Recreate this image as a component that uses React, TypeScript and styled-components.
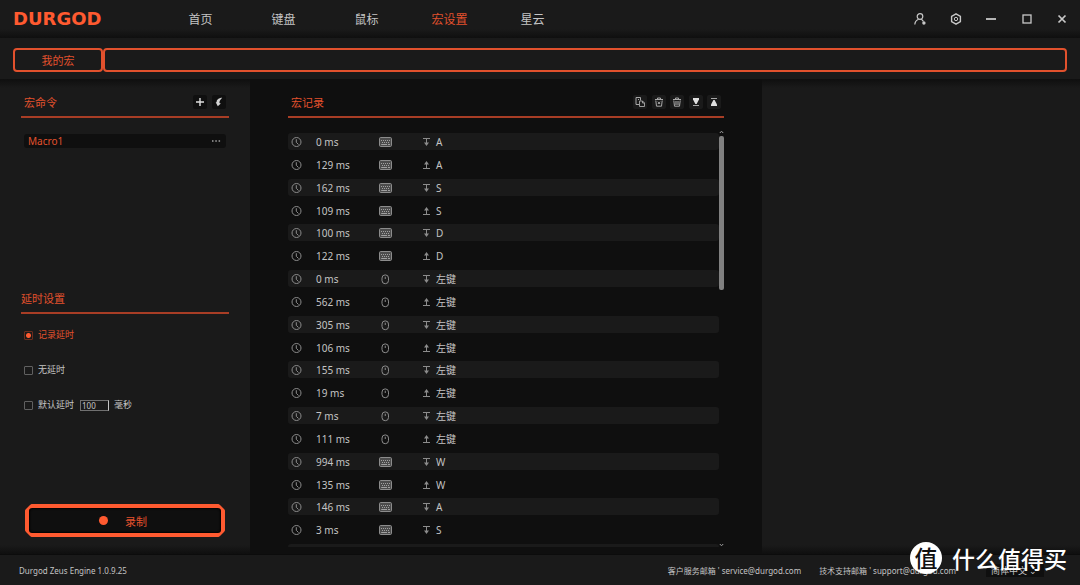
import React, { useState } from "react";
import styled, { createGlobalStyle, css } from "styled-components";

const c = {
  panel: "#1a1a1a",
  deep: "#0f0f0f",
  edge: "#0c0c0c",
  accent: "#ff5a30",
  accentText: "#e2512d",
  rule: "#a83d25",
  text: "#c4c4c4",
  icon: "#8c8c8c",
};

const Global = createGlobalStyle`
  *, *::before, *::after { box-sizing: border-box; }
  body {
    margin: 0;
    background: ${c.panel};
    color: ${c.text};
    font-family: "Noto Sans", "Noto Sans CJK SC", sans-serif;
    font-size: 10px;
  }
  button, input, select { font: inherit; color: inherit; margin: 0; padding: 0; }
  button { cursor: pointer; background: none; border: 0; }
  h2 { margin: 0; font-weight: 400; }
`;

const Page = styled.div`
  position: relative;
  display: flex;
  flex-direction: column;
  min-height: 100vh;
`;

const Header = styled.header`
  display: flex;
  align-items: center;
  height: 38px;
  padding: 0 12px 0 13px;
  background: linear-gradient(to top, ${c.deep}, ${c.panel} 9px);
`;

const Logo = styled.div`
  width: 146px;
  font: 700 18px/38px "DejaVu Sans", sans-serif;
  color: ${c.accent};
`;

const Nav = styled.nav`
  display: flex;
  flex: 1;
`;

const NavLink = styled.a<{ $active?: boolean }>`
  width: 83px;
  padding-top: 2px;
  text-align: center;
  font-size: 12px;
  line-height: 36px;
  text-decoration: none;
  color: ${(p) => (p.$active ? c.accentText : c.text)};
`;

const WindowControls = styled.div`
  display: flex;
  justify-content: space-between;
  width: 154px;
`;

const ControlButton = styled.button`
  display: grid;
  place-items: center;
  width: 12px;
  height: 38px;
  color: #c8c8c8;
  svg { overflow: visible; }
`;

const MacroBar = styled.div`
  display: flex;
  height: 41px;
  padding: 10px 13px 7px;
`;

const frame = css`
  height: 24px;
  border: 2px solid ${c.accentText};
  border-radius: 4px;
`;

const MacroTab = styled.button`
  ${frame}
  width: 90px;
  font-size: 11px;
  color: ${c.accentText};
`;

const MacroStrip = styled.div`
  ${frame}
  flex: 1;
`;

const Main = styled.main`
  display: grid;
  grid-template-columns: 250px 512fr 318fr;
  flex: 1;
  min-height: 0;
`;

const sidePanel = css`
  background:
    linear-gradient(${c.deep}, transparent) top / 100% 9px no-repeat,
    linear-gradient(transparent, ${c.deep}) bottom / 100% 9px no-repeat,
    ${c.panel};
`;

const Sidebar = styled.aside`
  ${sidePanel}
  display: flex;
  flex-direction: column;
  padding: 0 21px 17px;
`;

const EmptyPanel = styled.section`
  ${sidePanel}
`;

const Records = styled.section`
  display: flex;
  flex-direction: column;
  padding: 0 38px 7px;
  background: ${c.deep};
`;

const SectionHead = styled.div<{ $inset?: boolean }>`
  display: flex;
  align-items: center;
  justify-content: space-between;
  height: 39px;
  padding: 9px 3px 0 ${(p) => (p.$inset ? "3px" : "0")};
  border-bottom: 2px solid ${c.rule};
`;

const SectionTitle = styled.h2`
  padding-top: 2px;
  font-size: 11px;
  line-height: 16px;
  color: ${c.accentText};
`;

const Tools = styled.div<{ $width: number }>`
  display: flex;
  justify-content: space-between;
  width: ${(p) => p.$width}px;
`;

const ToolButton = styled.button<{ $dark?: boolean }>`
  display: grid;
  place-items: center;
  width: 14px;
  height: 14px;
  border-radius: 2px;
  background: ${(p) => (p.$dark ? c.deep : c.panel)};
  color: #a8a8a8;
`;

const MacroItem = styled.div`
  display: flex;
  align-items: center;
  justify-content: space-between;
  height: 14px;
  margin: 16px 3px 0;
  padding: 0 5px 0 4px;
  border-radius: 3px;
  background: ${c.deep};
`;

const MacroName = styled.button`
  line-height: 14px;
  color: ${c.accentText};
`;

const MoreButton = styled.button`
  display: grid;
  width: 10px;
  color: #a0a0a0;
`;

const DelaySection = styled.section`
  margin-top: 127px;
`;

const DelayOptions = styled.div`
  display: flex;
  flex-direction: column;
  gap: 21px;
  padding: 14px 3px 0;
  font-size: 9px;
`;

const DelayRow = styled.div<{ $on?: boolean }>`
  display: flex;
  align-items: center;
  height: 14px;
  color: ${(p) => (p.$on ? c.accentText : c.text)};
  label { line-height: 14px; }
`;

const Radio = styled.input`
  appearance: none;
  width: 9px;
  height: 9px;
  margin-right: 5px;
  border: 1px solid #606060;
  border-radius: 1px;
  &:checked {
    border-color: #6b2d1e;
    background: radial-gradient(circle, ${c.accent} 2px, transparent 3px);
  }
`;

const DelayInput = styled.input`
  width: 29px;
  height: 11px;
  margin: 0 5px 0 6px;
  padding-left: 1px;
  border: 1px solid #707070;
  border-right-color: ${c.text};
  background: ${c.panel};
  font-size: 8px;
  line-height: 9px;
`;

const RecordButton = styled.button`
  display: flex;
  align-items: center;
  justify-content: center;
  gap: 17px;
  height: 33px;
  margin: auto 4px 0;
  padding-right: 4px;
  border: 4px solid ${c.accent};
  border-radius: 7px;
  clip-path: polygon(6px 0, calc(100% - 6px) 0, 100% 6px, 100% calc(100% - 6px), calc(100% - 6px) 100%, 6px 100%, 0 calc(100% - 6px), 0 6px);
  background: ${c.deep};
  box-shadow: inset 0 0 2px 1px #000;
  font-size: 11px;
  color: ${c.accentText};
  &::before {
    content: "";
    width: 9px;
    height: 9px;
    border-radius: 50%;
    background: ${c.accent};
  }
`;

const RecordArea = styled.div`
  display: grid;
  grid-template-columns: 1fr 5px;
  flex: 1;
  margin-top: 12px;
`;

const RecordList = styled.ol`
  display: grid;
  grid-template-rows: repeat(18, minmax(17px, 1fr)) 3px;
  margin: 0;
  padding: 3px 0 0;
  list-style: none;
`;

const RecordRow = styled.li`
  display: grid;
  grid-template-columns: 25px 63px 44px 13px 1fr;
  align-items: center;
  height: 17px;
  padding: 2px 0 0 3px;
  border-radius: 3px;
  color: ${c.text};
  line-height: 15px;
  &:nth-child(odd) { background: ${c.panel}; }
  &:last-child { height: 3px; border-radius: 3px 3px 0 0; }
  svg { color: ${c.icon}; }
`;

const Scrollbar = styled.div`
  display: flex;
  flex-direction: column;
  align-items: center;
  color: #a0a0a0;
`;

const Thumb = styled.div`
  width: 5px;
  height: 154px;
  margin: 2px 0 auto;
  border-radius: 2px;
  background: #808080;
`;

const Footer = styled.footer`
  display: flex;
  align-items: center;
  height: 31px;
  padding: 0 36px 0 19px;
  border-top: 1px solid ${c.edge};
  font-size: 8px;
`;

const Contacts = styled.div`
  display: flex;
  gap: 18px;
  margin: 0 30px 0 auto;
`;

const Language = styled.select`
  appearance: none;
  width: 58px;
  height: 13px;
  padding-left: 5px;
  border: 0;
  background: ${c.deep};
  font-size: 9px;
  line-height: 13px;
`;

const Watermark = styled.div`
  position: absolute;
  right: 13px;
  bottom: 10px;
  display: flex;
  align-items: center;
  gap: 10px;
  color: #fff;
  font: 500 23px/34px "Noto Sans CJK SC", sans-serif;
  pointer-events: none;
`;

const Seal = styled.span`
  width: 32px;
  height: 32px;
  border-radius: 50%;
  background: #fff;
  color: #111;
  line-height: 31px;
  text-align: center;
`;

const Svg = ({ w, h, children }: { w: number; h: number; children: React.ReactNode }) => (
  <svg width={w} height={h} viewBox={`0 0 ${w} ${h}`} fill="none" stroke="currentColor" aria-hidden="true">
    {children}
  </svg>
);

const UserIcon = () => (
  <Svg w={12} h={12}>
    <circle cx="6" cy="3.5" r="2.8" strokeWidth="1.2" />
    <path d="M.8 11.5C1 8.6 2.6 7 4.6 6.2M7.4 6.2L9.4 8.4" strokeWidth="1.2" />
    <circle cx="9.9" cy="10" r="1.7" fill="currentColor" stroke="none" />
  </Svg>
);
const SettingsIcon = () => (
  <Svg w={12} h={12}>
    <path d="M6 .8l4.4 2.500v5.400L6 11.200 1.600 8.700V3.300z" strokeWidth="1.4" strokeLinejoin="round" />
    <circle cx="6" cy="6" r="1.700" />
  </Svg>
);
const MinimizeIcon = () => <Svg w={12} h={12}><path d="M1 6h10" strokeWidth="1.8" /></Svg>;
const MaximizeIcon = () => <Svg w={12} h={12}><rect x="2" y="2" width="8" height="8" strokeWidth="1.3" /></Svg>;
const CloseIcon = () => <Svg w={12} h={12}><path d="M2.500 2.500l7 7m0-7l-7 7" strokeWidth="1.7" /></Svg>;
const PlusIcon = () => <Svg w={10} h={10}><path d="M5 1v8M1 5h8" stroke="#e0e0e0" strokeWidth="1.4" /></Svg>;
const ImportIcon = () => (
  <Svg w={10} h={10}>
    <path d="M8.200.700C4.800.800 2.300 2.800 2.700 5.300L1.700 5.200 3.800 9.300 6.800 6.500 5.500 6C5.200 4.300 6.200 3 8.200.700z" fill="#d4d4d4" stroke="none" />
  </Svg>
);
const CopyIcon = () => (
  <Svg w={12} h={12}>
    <path d="M5 8.500H2V1.500H6.500V4.500M4 3.500H5" />
    <path d="M5.500 5H8.500L10.500 7V10.500H5.500zM8.500 5V7H10.500" strokeWidth=".9" />
  </Svg>
);
const TrashIcon = ({ all }: { all?: boolean }) => (
  <Svg w={10} h={10}>
    <path d="M1 2.500H9M3.500 2V1H6.500V2" />
    <path d="M1.800 3.500L2.500 9.200H7.500L8.200 3.500" />
    {all ? <path d="M3.800 4V8M5 4V8M6.200 4V8" strokeWidth=".8" /> : <path d="M3.900 4.700L6.100 7M6.100 4.700L3.900 7" />}
  </Svg>
);
const MoveIcon = ({ up }: { up?: boolean }) => (
  <Svg w={10} h={10}>
    <g transform={up ? "rotate(180 5 5)" : undefined}>
      <path d="M2 1H8V2.500L5.600 7H4.400L2 2.500z" fill="#e0e0e0" stroke="none" />
      <path d="M2 8.500H8" />
    </g>
  </Svg>
);
const DotsIcon = () => (
  <Svg w={10} h={4}>
    <path d="M1 2h1.500M4.300 2h1.500M7.600 2h1.500" strokeWidth="1.400" />
  </Svg>
);
const ClockIcon = () => (
  <Svg w={11} h={11}>
    <circle cx="5.500" cy="5" r="4.500" />
    <path d="M5.300 2.200V5.300L7.500 7.500" />
  </Svg>
);
const KeyboardIcon = () => (
  <Svg w={13} h={11}>
    <rect x=".5" y=".5" width="12" height="9" rx="1.200" fill="#4c4c4c" />
    <path d="M2 3.500H11M3 5.500H11" strokeDasharray="1 1" stroke="#a0a0a0" />
    <path d="M2.200 7.500H8M9 7.500H11" stroke="#a0a0a0" />
  </Svg>
);
const MouseIcon = () => (
  <Svg w={13} h={11}>
    <rect x="3" y=".9" width="6.500" height="8.800" rx="3.200" />
    <path d="M6.250 2.700V5" />
  </Svg>
);
const KeyArrow = ({ up }: { up: boolean }) => (
  <Svg w={7} h={11}>
    <g transform={up ? "rotate(180 3.500 5)" : undefined}>
      <path d="M0 1.500H7M3.500 1.500V7" />
      <path d="M1 5.500H6L3.500 9z" fill="currentColor" stroke="none" />
    </g>
  </Svg>
);
const Chevron = ({ down }: { down?: boolean }) => (
  <Svg w={5} h={4}><path d={down ? "M.8 1L2.500 2.800 4.200 1" : "M.8 3L2.500 1.200 4.200 3"} /></Svg>
);

type Rec = [number, "key" | "mouse", "down" | "up", string];
const records: Rec[] = [
  [0, "key", "down", "A"],
  [129, "key", "up", "A"],
  [162, "key", "down", "S"],
  [109, "key", "up", "S"],
  [100, "key", "down", "D"],
  [122, "key", "up", "D"],
  [0, "mouse", "down", "左键"],
  [562, "mouse", "up", "左键"],
  [305, "mouse", "down", "左键"],
  [106, "mouse", "up", "左键"],
  [155, "mouse", "down", "左键"],
  [19, "mouse", "up", "左键"],
  [7, "mouse", "down", "左键"],
  [111, "mouse", "up", "左键"],
  [994, "key", "down", "W"],
  [135, "key", "up", "W"],
  [146, "key", "down", "A"],
  [3, "key", "down", "S"],
];

const navItems = ["首页", "键盘", "鼠标", "宏设置", "星云"];

export default function App() {
  const [delay, setDelay] = useState("record");
  const radio = (id: string) => (
    <Radio type="radio" name="delay" id={id} checked={delay === id} onChange={() => setDelay(id)} />
  );
  return (
    <Page lang="zh-CN">
      <Global />
      <Header>
        <Logo>DURGOD</Logo>
        <Nav>
          {navItems.map((n) => (
            <NavLink key={n} href="#" $active={n === "宏设置"}>{n}</NavLink>
          ))}
        </Nav>
        <WindowControls>
          <ControlButton aria-label="账户"><UserIcon /></ControlButton>
          <ControlButton aria-label="设置"><SettingsIcon /></ControlButton>
          <ControlButton aria-label="最小化"><MinimizeIcon /></ControlButton>
          <ControlButton aria-label="最大化"><MaximizeIcon /></ControlButton>
          <ControlButton aria-label="关闭"><CloseIcon /></ControlButton>
        </WindowControls>
      </Header>

      <MacroBar>
        <MacroTab>我的宏</MacroTab>
        <MacroStrip />
      </MacroBar>

      <Main>
        <Sidebar>
          <SectionHead $inset>
            <SectionTitle>宏命令</SectionTitle>
            <Tools $width={33}>
              <ToolButton $dark aria-label="新建"><PlusIcon /></ToolButton>
              <ToolButton $dark aria-label="导入"><ImportIcon /></ToolButton>
            </Tools>
          </SectionHead>
          <MacroItem>
            <MacroName>Macro1</MacroName>
            <MoreButton aria-label="更多"><DotsIcon /></MoreButton>
          </MacroItem>

          <DelaySection>
            <SectionHead>
              <SectionTitle>延时设置</SectionTitle>
            </SectionHead>
            <DelayOptions>
              <DelayRow $on={delay === "record"}>
                {radio("record")}
                <label htmlFor="record">记录延时</label>
              </DelayRow>
              <DelayRow $on={delay === "none"}>
                {radio("none")}
                <label htmlFor="none">无延时</label>
              </DelayRow>
              <DelayRow $on={delay === "default"}>
                {radio("default")}
                <label htmlFor="default">默认延时</label>
                <DelayInput id="delay-ms" defaultValue="100" />
                <label htmlFor="delay-ms">毫秒</label>
              </DelayRow>
            </DelayOptions>
          </DelaySection>

          <RecordButton>录制</RecordButton>
        </Sidebar>

        <Records>
          <SectionHead $inset>
            <SectionTitle>宏记录</SectionTitle>
            <Tools $width={88}>
              <ToolButton aria-label="复制"><CopyIcon /></ToolButton>
              <ToolButton aria-label="删除"><TrashIcon /></ToolButton>
              <ToolButton aria-label="清空"><TrashIcon all /></ToolButton>
              <ToolButton aria-label="下移"><MoveIcon /></ToolButton>
              <ToolButton aria-label="上移"><MoveIcon up /></ToolButton>
            </Tools>
          </SectionHead>
          <RecordArea>
            <RecordList>
              {records.map(([ms, device, dir, name], i) => (
                <RecordRow key={i}>
                  <ClockIcon />
                  <span>{ms} ms</span>
                  {device === "key" ? <KeyboardIcon /> : <MouseIcon />}
                  <KeyArrow up={dir === "up"} />
                  <span>{name}</span>
                </RecordRow>
              ))}
              <RecordRow />
            </RecordList>
            <Scrollbar>
              <Chevron />
              <Thumb />
              <Chevron down />
            </Scrollbar>
          </RecordArea>
        </Records>

        <EmptyPanel />
      </Main>

      <Footer>
        <span>Durgod Zeus Engine 1.0.9.25</span>
        <Contacts>
          <span>客户服务邮箱 ' service@durgod.com</span>
          <span>技术支持邮箱 ' support@durgod.com</span>
        </Contacts>
        <Language aria-label="语言">
          <option>简体中文 ⌄</option>
        </Language>
      </Footer>

      <Watermark>
        <Seal>值</Seal>
        <span>什么值得买</span>
      </Watermark>
    </Page>
  );
}
